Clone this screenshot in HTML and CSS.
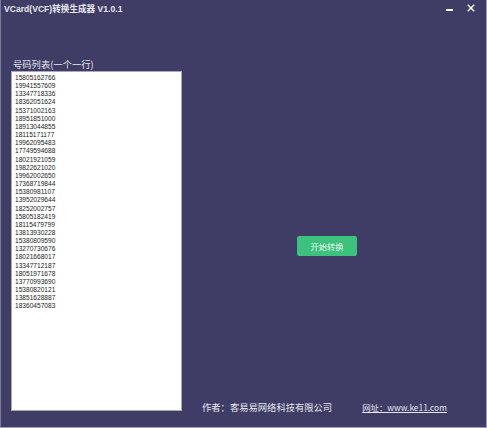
FILE: index.html
```html
<!DOCTYPE html>
<html lang="zh">
<head>
<meta charset="utf-8">
<title>VCard(VCF)转换生成器</title>
<link rel="stylesheet" href="styles.css">
</head>
<body>
<div class="window">
  <div class="titlebar">
    <div class="title">VCard(VCF)转换生成器 V1.0.1</div>
    <div class="controls">
      <span class="ctl min"><span class="dash"></span></span>
      <span class="ctl close">
        <svg width="8" height="8" viewBox="0 0 8 8"><path d="M1.3 1.3 L6.7 6.7 M6.7 1.3 L1.3 6.7" stroke="#ffffff" stroke-width="1.5" stroke-linecap="square"/></svg>
      </span>
    </div>
  </div>
  <div class="content">
    <div class="left">
      <div class="label">号码列表(一个一行)</div>
      <div class="listbox">
        <div>15805162766</div>
        <div>19941557609</div>
        <div>13347718336</div>
        <div>18362051624</div>
        <div>15371002163</div>
        <div>18951851000</div>
        <div>18913044855</div>
        <div>18115171177</div>
        <div>19962095483</div>
        <div>17749594688</div>
        <div>18021921059</div>
        <div>19822621020</div>
        <div>19962002650</div>
        <div>17368719844</div>
        <div>15380981107</div>
        <div>13952029644</div>
        <div>18252002757</div>
        <div>15805182419</div>
        <div>18115479799</div>
        <div>13813930228</div>
        <div>15380809590</div>
        <div>13270730676</div>
        <div>18021668017</div>
        <div>13347712187</div>
        <div>18051971678</div>
        <div>13770993690</div>
        <div>15380820121</div>
        <div>13851628887</div>
        <div>18360457083</div>
      </div>
    </div>
    <div class="right">
      <div class="btn-row"><button class="start">开始转换</button></div>
      <div class="footer">
        <span class="author">作者：客易易网络科技有限公司</span>
        <span class="site">网址：www.ke11.com</span>
      </div>
    </div>
  </div>
</div>
</body>
</html>
```
FILE: styles.css
```css
html, body {
  margin: 0;
  padding: 0;
  background: #3f3d66;
}
.window {
  width: 487px;
  height: 428px;
  box-sizing: border-box;
  background: #3f3d66;
  border-left: 1px solid #7c7b98;
  border-right: 1px solid #9e9db4;
  border-bottom: 1px solid #9e9db4;
  display: flex;
  flex-direction: column;
  font-family: "Noto Sans CJK SC", "Liberation Sans", sans-serif;
  color: #ffffff;
}
.titlebar {
  height: 20px;
  display: flex;
  justify-content: space-between;
  align-items: flex-start;
}
.title {
  font-family: "Liberation Sans", "Noto Sans CJK SC", sans-serif;
  font-size: 8.6px;
  font-weight: 600;
  line-height: 12px;
  margin-top: 3px;
  margin-left: 3px;
  color: #e8e8f0;
}
.controls {
  display: flex;
  margin-right: 4px;
}
.ctl {
  width: 22px;
  height: 15px;
  display: flex;
  align-items: center;
  justify-content: center;
}
.min .dash {
  width: 7px;
  height: 2px;
  background: #ffffff;
  margin-top: 4px;
}
.right {
  flex: 1;
  display: flex;
  flex-direction: column;
}
.content {
  flex: 1;
  display: flex;
}
.left {
  padding-left: 10px;
  display: flex;
  flex-direction: column;
}
.label {
  margin-top: 38px;
  font-size: 9.3px;
  line-height: 13px;
  color: #e6e6ee;
  padding-left: 2px;
}
.listbox {
  width: 171px;
  height: 340px;
  box-sizing: border-box;
  background: #ffffff;
  border: 1px solid #a9a9b8;
  padding: 2px 3px;
  color: #222222;
  font-family: "Liberation Sans", sans-serif;
  font-size: 6.6px;
  line-height: 8.15px;
}
.btn-row {
  padding-top: 211px;
  padding-left: 115px;
}
.start {
  width: 60px;
  height: 20px;
  border: none;
  border-radius: 2px;
  background: #3cc27c;
  color: #eaf8f0;
  font-family: "Noto Sans CJK SC", sans-serif;
  font-size: 8.2px;
  padding: 0;
}
.footer {
  margin-top: auto;
  padding-bottom: 14px;
  padding-left: 20px;
  display: flex;
  font-size: 9.3px;
  line-height: 12px;
  color: #e6e6ee;
}
.site {
  margin-left: 30px;
  font-size: 8.4px;
  text-decoration: underline;
}
```
